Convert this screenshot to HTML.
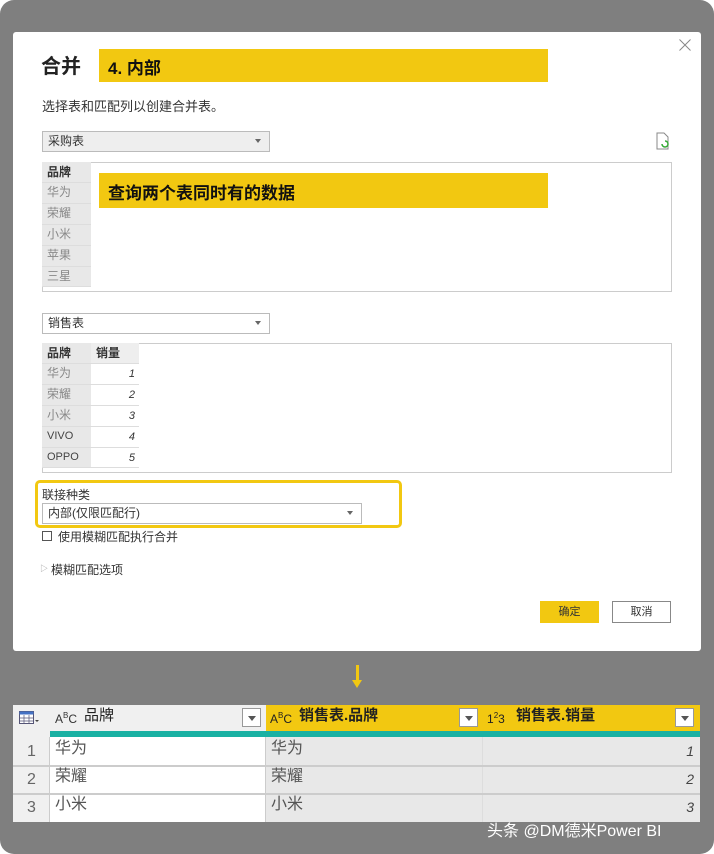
<html><head><style>
*{margin:0;padding:0;box-sizing:border-box}
body{width:714px;height:854px;background:#fff;font-family:"Liberation Sans","Noto Sans CJK SC",sans-serif;position:relative;overflow:hidden}
.bg{position:absolute;left:0;top:0;width:714px;height:854px;background:#7f7f7f;border-radius:14px}
.a{position:absolute}
.dlg{left:13px;top:32px;width:688px;height:619px;background:#fff;border-radius:3px}
.y{background:#f2c811;font-weight:bold;color:#111}
.cell{position:absolute;font-size:12px;color:#888;padding-left:5px;border-bottom:1px solid #ddd}
.num{position:absolute;font-size:11px;font-style:italic;color:#333;text-align:right;padding-right:4px;border-bottom:1px solid #ddd;background:#fff}
.dd{border:1px solid #bbb;font-size:12px;color:#333;padding-left:5px;line-height:18px}
.tri{position:absolute;right:8px;top:7px;border-left:3px solid transparent;border-right:3px solid transparent;border-top:4px solid #666}
.h{position:absolute;font-size:15px;font-weight:bold;color:#222;line-height:26px}
.r{position:absolute;font-size:16px;color:#555;line-height:28px;border-bottom:2px solid #ccc}
.fb{position:absolute;width:19px;height:19px;border:1px solid #999;background:#fff;top:4px}
.fb:after{content:"";position:absolute;left:5px;top:7px;border-left:4px solid transparent;border-right:4px solid transparent;border-top:5px solid #555}
</style></head><body>
<div class="bg"></div>
<div class="a dlg"></div>
<svg class="a" style="left:679px;top:39px" width="12" height="12"><path d="M0.5 0.5l11 11M11.5 0.5l-11 11" stroke="#888" stroke-width="1"/></svg>
<div class="a" style="left:41px;top:50px;font-size:20px;font-weight:bold;color:#222">合并</div>
<div class="a y" style="left:99px;top:49px;width:449px;height:33px;font-size:17px;padding:5px 0 0 9px">4. 内部</div>
<div class="a" style="left:42px;top:96px;font-size:13px;color:#333">选择表和匹配列以创建合并表。</div>
<div class="a dd" style="left:42px;top:131px;width:228px;height:21px;background:#eee">采购表<span class="tri"></span></div>
<svg class="a" style="left:655px;top:132px" width="16" height="18"><path d="M2 1h7l4 4v12H2z" fill="none" stroke="#888"/><path d="M7 12a3 3 0 1 0 3-3" fill="none" stroke="#3a3" stroke-width="1.5"/></svg>
<div class="a" style="left:42px;top:162px;width:630px;height:130px;border:1px solid #ccc"></div>
<div class="a" style="left:42px;top:162px;width:49px;height:125px;background:#e8e8e8"></div>
<div class="cell" style="left:42px;top:163px;width:49px;height:20px;color:#333;font-weight:bold">品牌</div>
<div class="cell" style="left:42px;top:183px;width:49px;height:21px">华为</div>
<div class="cell" style="left:42px;top:204px;width:49px;height:21px">荣耀</div>
<div class="cell" style="left:42px;top:225px;width:49px;height:21px">小米</div>
<div class="cell" style="left:42px;top:246px;width:49px;height:21px">苹果</div>
<div class="cell" style="left:42px;top:267px;width:49px;height:20px">三星</div>
<div class="a y" style="left:99px;top:173px;width:449px;height:35px;font-size:17px;padding:6px 0 0 9px">查询两个表同时有的数据</div>
<div class="a dd" style="left:42px;top:313px;width:228px;height:21px;background:#fff">销售表<span class="tri"></span></div>
<div class="a" style="left:42px;top:343px;width:630px;height:130px;border:1px solid #ccc"></div>
<div class="a" style="left:42px;top:343px;width:49px;height:125px;background:#e8e8e8"></div>
<div class="a" style="left:91px;top:343px;width:48px;height:20px;background:#eee"></div>
<div class="cell" style="left:42px;top:344px;width:49px;height:20px;color:#333;font-weight:bold">品牌</div>
<div class="cell" style="left:91px;top:344px;width:48px;height:20px;color:#333;font-weight:bold">销量</div>
<div class="cell" style="left:42px;top:364px;width:49px;height:21px">华为</div><div class="num" style="left:91px;top:364px;width:48px;height:21px;line-height:21px">1</div>
<div class="cell" style="left:42px;top:385px;width:49px;height:21px">荣耀</div><div class="num" style="left:91px;top:385px;width:48px;height:21px;line-height:21px">2</div>
<div class="cell" style="left:42px;top:406px;width:49px;height:21px">小米</div><div class="num" style="left:91px;top:406px;width:48px;height:21px;line-height:21px">3</div>
<div class="cell" style="left:42px;top:427px;width:49px;height:21px;color:#444;font-size:11px;line-height:19px">VIVO</div><div class="num" style="left:91px;top:427px;width:48px;height:21px;line-height:21px">4</div>
<div class="cell" style="left:42px;top:448px;width:49px;height:20px;color:#444;font-size:11px;line-height:19px">OPPO</div><div class="num" style="left:91px;top:448px;width:48px;height:20px;line-height:20px">5</div>
<div class="a" style="left:35px;top:480px;width:367px;height:48px;border:3px solid #f2c811;border-radius:5px"></div>
<div class="a" style="left:42px;top:486px;font-size:12px;color:#333">联接种类</div>
<div class="a dd" style="left:42px;top:503px;width:320px;height:21px">内部(仅限匹配行)<span class="tri"></span></div>
<div class="a" style="left:42px;top:531px;width:10px;height:10px;border:1.5px solid #555"></div>
<div class="a" style="left:58px;top:528px;font-size:12px;color:#333">使用模糊匹配执行合并</div>
<div class="a" style="left:40px;top:563px;font-size:8px;color:#999">▷</div>
<div class="a" style="left:51px;top:561px;font-size:12px;color:#333">模糊匹配选项</div>
<div class="a" style="left:540px;top:601px;width:59px;height:22px;background:#f2c811;font-size:11px;text-align:center;line-height:22px;color:#333">确定</div>
<div class="a" style="left:612px;top:601px;width:59px;height:22px;border:1px solid #888;font-size:11px;text-align:center;line-height:20px;color:#333;background:#fff">取消</div>
<div class="a" style="left:356px;top:665px;width:3px;height:18px;background:#f2c811"></div>
<div class="a" style="left:352px;top:680px;border-left:5px solid transparent;border-right:5px solid transparent;border-top:8px solid #f2c811"></div>
<div class="a" style="left:13px;top:705px;width:687px;height:117px;background:#fff"></div>
<div class="a" style="left:13px;top:705px;width:37px;height:32px;background:#f0f0f0"></div>
<svg class="a" style="left:19px;top:711px" width="22" height="14"><rect x="0.5" y="0.5" width="14" height="12" fill="#fff" stroke="#557"/><rect x="0.5" y="0.5" width="14" height="3" fill="#4472c4"/><path d="M5 4v9M10 4v9M1 7h14M1 10h14" stroke="#557" stroke-width="0.7"/><path d="M16 9l2 2 2-2z" fill="#444"/></svg>
<div class="a" style="left:50px;top:705px;width:216px;height:27px;background:#f0f0f0"></div>
<div class="a" style="left:266px;top:705px;width:434px;height:27px;background:#f2c811"></div>
<div class="a" style="left:50px;top:731px;width:650px;height:6px;background:#1ab1a3"></div>
<div class="h" style="left:55px;top:703px;font-weight:normal;font-size:12px;color:#333">A<sup style="font-size:8px">B</sup>C</div><div class="h" style="left:84px;top:703px;font-weight:normal">品牌</div>
<div class="fb" style="left:242px;top:708px"></div>
<div class="h" style="left:270px;top:703px;font-weight:normal;font-size:12px">A<sup style="font-size:8px">B</sup>C</div><div class="h" style="left:299px;top:703px">销售表.品牌</div>
<div class="fb" style="left:459px;top:708px"></div>
<div class="h" style="left:487px;top:703px;font-weight:normal;font-size:12px">1<sup style="font-size:8px">2</sup>3</div><div class="h" style="left:516px;top:703px">销售表.销量</div>
<div class="fb" style="left:675px;top:708px"></div>
<div class="a" style="left:266px;top:737px;width:434px;height:85px;background:#e8e8e8"></div>
<div class="a" style="left:13px;top:737px;width:37px;height:85px;background:#f0f0f0"></div>
<div class="a" style="left:265px;top:737px;width:1px;height:85px;background:#ccc"></div>
<div class="a" style="left:482px;top:737px;width:1px;height:85px;background:#ddd"></div>
<div class="a" style="left:49px;top:737px;width:1px;height:85px;background:#ccc"></div>
<div class="r" style="left:13px;top:737px;width:687px;height:30px"></div>
<div class="r" style="left:13px;top:765px;width:687px;height:30px"></div>
<div class="a" style="left:13px;top:738px;width:37px;font-size:16px;color:#666;text-align:center;line-height:28px">1<br>2<br>3</div>
<div class="a" style="left:55px;top:735px;font-size:16px;color:#555;line-height:28px">华为<br>荣耀<br>小米</div>
<div class="a" style="left:271px;top:735px;font-size:16px;color:#555;line-height:28px">华为<br>荣耀<br>小米</div>
<div class="a" style="left:600px;top:737px;width:94px;text-align:right;font-size:14px;font-style:italic;color:#444;line-height:28px">1<br>2<br>3</div>
<div class="a" style="left:487px;top:817px;font-size:16px;color:#fff">头条 @DM德米Power BI</div>
</body></html>
